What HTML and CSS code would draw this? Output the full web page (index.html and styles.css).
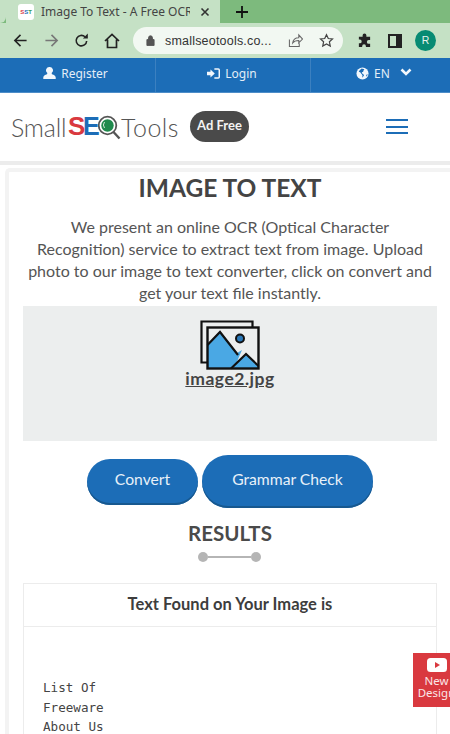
FILE: index.html
```html
<!DOCTYPE html>
<html lang="en">
<head>
<meta charset="utf-8">
<title>Image To Text</title>
<link rel="stylesheet" href="styles.css">
</head>
<body>
<div class="tabstrip">
  <div class="tab-start"></div>
  <div class="tab">
    <span class="favicon"><i class="r">S</i><i class="b">S</i><i class="t">T</i></span>
    <span class="tab-title">Image To Text - A Free OCR C</span>
    <svg class="tab-close" viewBox="0 0 10 10"><path d="M1.5 1.5l7 7M8.5 1.5l-7 7"/></svg>
  </div>
  <div class="new-tab"><svg viewBox="0 0 12 12"><path d="M6 0v12M0 6h12"/></svg></div>
</div>
<div class="toolbar">
  <svg class="tb-icon back" viewBox="0 0 16 16"><path d="M14.5 8H2M8 2L2 8l6 6"/></svg>
  <svg class="tb-icon fwd" viewBox="0 0 16 16"><path d="M1.5 8H14M8 2l6 6-6 6"/></svg>
  <svg class="tb-icon reload" viewBox="0 0 16 16"><path d="M13.5 8.5A5.6 5.6 0 1 1 11.7 4"/><path class="fill" d="M9.5 5.8h5.2V.6z"/></svg>
  <svg class="tb-icon home" viewBox="0 0 16 16"><path d="M1 8l7-6.500L15 8M3.500 6.500V14.500h9V6.500"/></svg>
  <div class="omnibox">
    <svg class="lock" viewBox="0 0 10 12"><path d="M1 5h8v6.500H1zM2.800 5V3a2.200 2.200 0 0 1 4.400 0v2"/></svg>
    <span class="url">smallseotools.co...</span>
    <svg class="share" viewBox="0 0 16 16"><path d="M1.500 7v7.500h10.500V11M5 10.500C5.500 6.500 8 5 11.500 5V2l4 4.500-4 4V8C8.500 8 6.500 8.500 5 10.500z"/></svg>
    <svg class="star" viewBox="0 0 16 16"><path d="M8 1.800l1.900 4.100 4.500.5-3.300 3 .9 4.500L8 11.600l-4 2.300.9-4.500-3.300-3 4.500-.5z"/></svg>
  </div>
  <svg class="puzzle" viewBox="0 0 16 16"><path d="M6 2.500a2 2 0 0 1 4 0V4h4v3.500h-1.500a2 2 0 0 0 0 4H14V15H9.500v-1a2 2 0 0 0-4 0v1H2v-4h1a2 2 0 0 0 0-4H2V4h4z"/></svg>
  <svg class="panel" viewBox="0 0 14 14"><path d="M0 0h14v14H0zM2 2v10h6V2z"/></svg>
  <span class="avatar">R</span>
</div>
<nav class="topnav">
  <a class="nav-item"><svg class="nav-icon" viewBox="0 0 14 14"><path d="M7 0a3.600 3.600 0 0 1 2.500 6.300c-.3.900 0 1.400 1 1.800 2 .7 3 1.500 3.200 3.200V13H.3v-1.700c.2-1.700 1.200-2.500 3.200-3.200 1-.4 1.300-.9 1-1.800A3.600 3.600 0 0 1 7 0z"/></svg>Register</a>
  <a class="nav-item nav-login"><svg class="nav-icon" viewBox="0 0 15 14"><path d="M0 5h4V2.500L9 7l-5 4.500V9H0zM8.500 1H13a2 2 0 0 1 2 2v8a2 2 0 0 1-2 2H8.500v-1.700H13l.3-.3V3l-.3-.3H8.500z"/></svg>Login</a>
  <a class="nav-item nav-lang"><svg class="nav-icon" viewBox="0 0 14 14"><circle cx="7" cy="7" r="6.500"/><path class="land" d="M6 1.500C5 3 3.500 3 3 5c1 .5 2 .5 2.500 2 .5 1 1.500 1 1.500 2.500l-.5 2L8 10c1-1 .5-2-.5-2.500-1-.3-1.500-1-1-2 1 .3 1.500-.5 1.500-1.500L9 2.500zM11 9l1-1.500.5 1-1.500 2z"/></svg>EN<svg class="chev" viewBox="0 0 12 8"><path d="M1.500 1.500L6 6l4.500-4.500"/></svg></a>
</nav>
<header class="sitehead">
  <div class="logo">
    <span class="logo-small">Small</span><span class="logo-s">S</span><span class="logo-e">E</span>
    <svg class="logo-q" viewBox="0 0 24 26"><circle cx="10.500" cy="10.500" r="8.800" fill="none" stroke="#555" stroke-width="1.800"/><circle cx="10.500" cy="10.500" r="6.200" fill="#1f8a4d"/><path d="M7.500 13a5 5 0 0 1 0-6" fill="none" stroke="#cfe8d6" stroke-width="1"/><path d="M16.500 17l6 6.500" stroke="#555" stroke-width="2.400" fill="none"/></svg>
    <span class="logo-tools">Tools</span>
  </div>
  <span class="adfree">Ad Free</span>
  <button class="burger"><span></span><span></span><span></span></button>
</header>
<div class="shell">
  <main class="card">
    <h1 class="title">IMAGE TO TEXT</h1>
    <p class="lead">We present an online OCR (Optical Character<br>Recognition) service to extract text from image. Upload<br>photo to our image to text converter, click on convert and<br>get your text file instantly.</p>
    <div class="dropzone">
      <svg class="pic" viewBox="0 0 60 50">
        <path class="pic-back" d="M1.500 1.500h51v7H8.500v34h-7z"/>
        <rect class="pic-frame-fill" x="7.500" y="7.500" width="51" height="41"/>
        <path class="pic-m" d="M7.500 24L20 11l17 22 5-3-8 18.500H7.500z"/>
        <path class="pic-m" d="M31 48.500L46 34l12.500 12v2.500z"/>
        <path class="pic-l" d="M7.500 25L20 12l18 23M31 48.500L46 34l12.500 12"/>
        <circle class="pic-sun" cx="40" cy="18.500" r="4"/>
        <rect class="pic-frame" x="7.500" y="7.500" width="51" height="41"/>
      </svg>
      <a class="filename">image2.jpg</a>
    </div>
    <div class="actions">
      <button class="btn btn-convert">Convert</button>
      <button class="btn btn-grammar">Grammar Check</button>
    </div>
    <h2 class="results">RESULTS</h2>
    <div class="divider"><span class="dot"></span><span class="line"></span><span class="dot"></span></div>
    <section class="result-box">
      <h3 class="result-head">Text Found on Your Image is</h3>
      <pre class="result-text">List Of
Freeware
About Us</pre>
    </section>
  </main>
</div>
<aside class="yt">
  <svg viewBox="0 0 20 14"><rect width="20" height="14" rx="3.500" fill="#fff"/><path d="M8 4l5 3-5 3z" fill="#d9393f"/></svg>
  <span>New<br>Design</span>
</aside>
</body>
</html>
```
FILE: styles.css
```css
* { box-sizing: border-box; }
html, body { margin: 0; height: 734px; overflow: hidden; }
body { position: relative; width: 450px; background: #fff; font-family: "Lato", "Open Sans", sans-serif; color: #555; }

.tabstrip { height: 23px; background: #7dba7d; display: flex; }
.tab-start { width: 6px; height: 23px; background: #c5e1c5; border-radius: 0 0 7px 0; }
.tab { width: 214px; height: 23px; background: #c5e1c5; display: flex; align-items: center; padding: 0 0 0 12px; }
.favicon { width: 16px; height: 16px; background: #fff; border-radius: 3px; display: flex; justify-content: center; align-items: center; font: bold 6px "Liberation Sans", sans-serif; flex: none; }
.favicon i { font-style: normal; }
.favicon .r { color: #d9393f; }
.favicon .b { color: #1c6db7; }
.favicon .t { color: #3a9a5a; }
.tab-title { width: 149px; margin-left: 7px; font: 12px "Noto Sans", sans-serif; color: #444; white-space: nowrap; overflow: hidden; flex: none; }
.tab-close { width: 10px; height: 10px; margin-left: 10px; fill: none; stroke: #333; stroke-width: 1.600; flex: none; }
.new-tab { width: 43px; height: 23px; display: flex; justify-content: center; align-items: center; }
.new-tab svg { width: 12px; height: 12px; fill: none; stroke: #111; stroke-width: 1.800; }

.toolbar { height: 35px; background: #c5e1c5; display: flex; align-items: center; padding: 0 0 0 13px; }
.tb-icon { width: 15px; height: 15px; fill: none; stroke: #222; stroke-width: 1.700; flex: none; }
.tb-icon .fill { fill: #222; stroke: none; }
.fwd { margin-left: 16px; stroke: #777; }
.reload { margin-left: 15px; }
.home { margin-left: 15px; width: 16px; height: 16px; }
.omnibox { width: 210px; height: 27px; margin-left: 13px; background: #f2f8f2; border-radius: 14px; display: flex; align-items: center; padding-left: 13px; flex: none; }
.lock { width: 9px; height: 11px; fill: #555; stroke: #555; stroke-width: 1; flex: none; }
.url { width: 120px; margin-left: 10px; font: 12.500px "Liberation Sans", sans-serif; color: #333; white-space: nowrap; letter-spacing: .2px; flex: none; }
.share { width: 15px; height: 15px; margin-left: 3px; fill: none; stroke: #666; stroke-width: 1.100; flex: none; }
.star { width: 15px; height: 15px; margin-left: 16px; fill: none; stroke: #444; stroke-width: 1.300; flex: none; }
.puzzle { width: 15px; height: 15px; margin-left: 14px; fill: #222; flex: none; }
.panel { width: 14px; height: 14px; margin-left: 16px; fill: #222; fill-rule: evenodd; flex: none; }
.avatar { width: 21px; height: 21px; margin-left: 13px; border-radius: 50%; background: #078b73; color: #e6f3ee; font: 10.500px/21px "Liberation Sans", sans-serif; text-align: center; flex: none; }

.topnav { height: 35px; background: #1c6db7; display: grid; grid-template-columns: 155px 155px 140px; border-bottom: 1px solid #4d8dc8; }
.nav-item { display: flex; align-items: center; justify-content: center; gap: 5px; color: #e4eef8; font-family: "Noto Sans", sans-serif; font-size: 12px; border-left: 1px solid #3b80c0; padding-bottom: 3px; }
.nav-item:first-child { border-left: 0; padding-right: 4px; }
.nav-login { padding-right: 2px; }
.nav-lang { padding-left: 7px; }
.nav-icon { width: 13px; height: 13px; fill: #f2f7fc; flex: none; }
.nav-icon .land { fill: #1c6db7; }
.chev { width: 12px; height: 8px; margin-left: 5px; margin-bottom: 3px; fill: none; stroke: #f2f7fc; stroke-width: 2.600; }

.sitehead { height: 68px; background: #fff; display: flex; align-items: center; padding: 0 0 0 11px; box-shadow: 0 4px 0 #ececec; position: relative; }
.logo { display: flex; align-items: center; width: 168px; height: 30px; margin-bottom: 1px; white-space: nowrap; font-weight: 300; font-size: 25px; color: #555; flex: none; }
.logo-small { width: 58px; letter-spacing: -.2px; }
.logo-s { width: 15px; font-family: "Liberation Sans", sans-serif; font-weight: 700; font-size: 26px; color: #d9393f; }
.logo-e { width: 13px; font-family: "Liberation Sans", sans-serif; font-weight: 700; font-size: 25px; color: #1c6db7; }
.logo-q { width: 24px; height: 26px; margin: 3px 0 0 1px; flex: none; }
.logo-tools { letter-spacing: .5px; }
.adfree { margin-left: 11px; margin-bottom: 1px; width: 59px; height: 31px; border-radius: 16px; background: #4a4a4a; color: #f3f3f3; font-size: 13px; font-weight: 700; text-align: center; line-height: 29px; flex: none; }
.burger { margin-left: 137px; width: 22px; height: 15px; margin-bottom: 1px; padding: 0; border: 0; background: none; display: flex; flex-direction: column; justify-content: space-between; flex: none; }
.burger span { display: block; height: 2px; background: #1c6db7; }

.shell { background: #fff; padding: 7px 0 0 5px; height: 575px; }
.card { background: #fff; border: solid #f3f3f3; border-width: 4px 0 0 4px; padding: 0 13px 0 14px; width: 445px; height: 568px; border-radius: 5px 0 0 0; }
.title { margin: 0; padding-top: 2px; height: 36px; text-align: center; font-size: 24.500px; line-height: 28px; font-weight: 700; color: #444; }
.lead { margin: 8px 0 0; text-align: center; font-size: 16px; line-height: 22px; color: #555; }
.dropzone { height: 135px; margin-top: 2px; background: #eceeee; display: flex; flex-direction: column; align-items: center; padding-top: 14px; }
.pic { width: 60px; height: 50px; flex: none; }
.pic-back { fill: #eceeee; stroke: #111; stroke-width: 2.200; }
.pic-frame-fill { fill: #eceeee; }
.pic-frame { fill: none; stroke: #111; stroke-width: 2.400; }
.pic-m { fill: #4aa8e4; }
.pic-l { fill: none; stroke: #111; stroke-width: 2.200; }
.pic-sun { fill: #2a78b8; stroke: #111; stroke-width: 2; }
.filename { margin-top: -1px; font-size: 17.500px; line-height: 20px; font-weight: 700; letter-spacing: .5px; color: #444; text-decoration: underline; }
.actions { display: flex; justify-content: center; align-items: center; gap: 4px; margin-top: 14px; height: 53px; }
.btn { border: 0; background: #1c6db7; color: #e8f1f9; font-family: inherit; font-size: 15.700px; border-radius: 26px; box-shadow: inset 0 -2px 0 #17588f; padding: 0 0 6px; }
.btn-convert { width: 111px; height: 46px; }
.btn-grammar { width: 171px; height: 53px; }
.results { margin: 12px 0 0; height: 26px; text-align: center; font-size: 20.500px; line-height: 26px; font-weight: 700; color: #4a4a4a; }
.divider { display: flex; align-items: center; justify-content: center; height: 10px; margin-top: 6px; padding-right: 2px; }
.dot { width: 10px; height: 10px; border-radius: 50%; background: #b5b5b5; flex: none; }
.line { width: 43px; height: 2px; background: #b5b5b5; flex: none; }
.result-box { margin-top: 21px; border: 1px solid #ececec; border-bottom: 0; height: 160px; }
.result-head { margin: 0; height: 43px; border-bottom: 1px solid #ececec; text-align: center; font-size: 16.500px; line-height: 41px; font-weight: 700; color: #3d3d3d; }
.result-text { margin: 51px 0 0 19px; font-family: "DejaVu Sans Mono", monospace; font-size: 12.600px; line-height: 19.500px; color: #444; }

.yt { position: absolute; left: 413px; top: 653px; width: 47px; height: 54px; background: #d9393f; color: #fbe7e8; font-family: "Noto Sans", sans-serif; font-size: 11.500px; line-height: 12px; padding: 5px 0 0; white-space: nowrap; text-align: center; }
.yt svg { display: block; width: 20px; height: 14px; margin: 0 auto 3px 14px; }
.yt span { display: block; }
```
